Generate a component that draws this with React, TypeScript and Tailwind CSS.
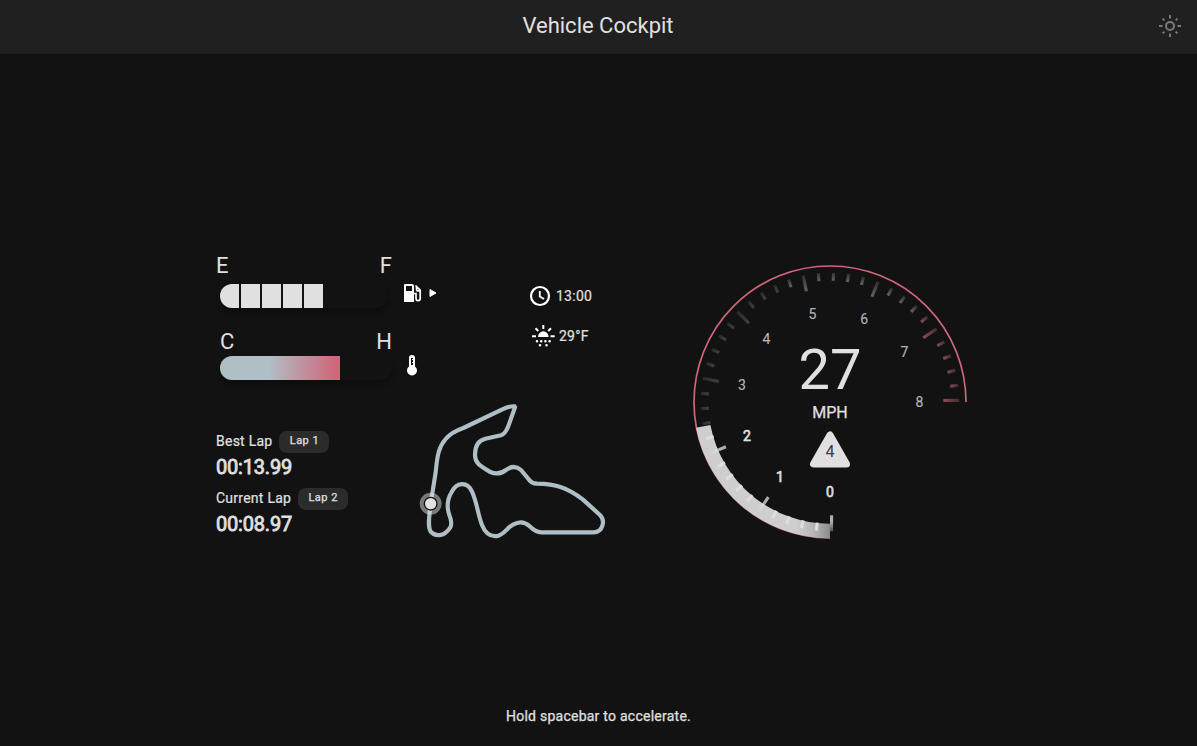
import React from "react";

const CX = 146;
const CY = 146;

function polar(r: number, deg: number): [number, number] {
  const a = (deg * Math.PI) / 180;
  return [CX - r * Math.sin(a), CY + r * Math.cos(a)];
}

function Gauge() {
  const ticks = Array.from({ length: 41 }, (_, i) => i);
  const labels: [string, number, number][] = [
    ["0", 146, 236],
    ["1", 96, 221],
    ["2", 63, 180],
    ["3", 58, 129],
    ["4", 82.5, 83],
    ["5", 128.5, 58],
    ["6", 180.3, 63],
    ["7", 220.5, 96],
    ["8", 235.5, 146],
  ];
  const [ex, ey] = polar(136.4, 79.1);
  const [ix, iy] = polar(121.8, 79.1);
  return (
    <svg width="292" height="292" viewBox="0 0 292 292" className="shrink-0 font-[Roboto,sans-serif]">
      <defs>
        <linearGradient id="fill" gradientUnits="userSpaceOnUse" x1="146" y1="0" x2="112" y2="0">
          <stop offset="0" stopColor="#8c8c8c" />
          <stop offset="0.5" stopColor="#b8b8b8" />
          <stop offset="1" stopColor="#cecece" />
        </linearGradient>
        <linearGradient id="tickOn" x1="0" y1="0" x2="0" y2="1">
          <stop offset="0" stopColor="#e0e0e0" stopOpacity="0.75" />
          <stop offset="0.4" stopColor="#e4e4e4" stopOpacity="0.75" />
          <stop offset="1" stopColor="#e0e0e0" stopOpacity="0.3" />
        </linearGradient>
        <linearGradient id="tickOff" x1="0" y1="0" x2="0" y2="1">
          <stop offset="0" stopColor="#424242" />
          <stop offset="1" stopColor="#292929" />
        </linearGradient>
        <linearGradient id="tickMid" x1="0" y1="0" x2="0" y2="1">
          <stop offset="0" stopColor="#636363" />
          <stop offset="1" stopColor="#303030" />
        </linearGradient>
        <linearGradient id="tickRed" x1="0" y1="0" x2="0" y2="1">
          <stop offset="0" stopColor="#8c4b56" />
          <stop offset="1" stopColor="#432a2f" />
        </linearGradient>
      </defs>
      <path d="M146 282A136 136 0 1 1 282 146" fill="none" stroke="#d0667a" strokeWidth="1.7" />
      <path
        d={`M146 282.400A136.4 136.4 0 0 1 ${ex} ${ey}L${ix} ${iy}A121.8 121.8 0 0 0 146 267.800Z`}
        fill="url(#fill)"
      />
      {ticks.map((i) => {
        const major = i % 5 === 0;
        const kind =
          i < 12 ? (major ? "url(#tickOn)" : "#dedede") : i > 33 ? "url(#tickRed)" : i > 23 ? "url(#tickMid)" : "url(#tickOff)";
        return (
          <rect
            key={i}
            x={146}
            y={major ? 259.3 : 267.3}
            width={3.1}
            height={major ? 16 : 8}
            fill={kind}
            transform={`rotate(${i * 6.75} 146 146)`}
          />
        );
      })}
      {labels.map(([t, x, y], i) => (
        <text
          key={t}
          x={x}
          y={y + 5}
          textAnchor="middle"
          fontSize="14"
          fill={i < 3 ? "#e0e0e0" : "#b4b4b4"}
          stroke={i < 3 ? "#e0e0e0" : "#b4b4b4"}
          strokeWidth={i < 3 ? 0.6 : 0.15}
        >
          {t}
        </text>
      ))}
      <text x="146" y="133" textAnchor="middle" fontSize="56" fill="#e0e0e0">27</text>
      <text x="146" y="162" textAnchor="middle" fontSize="16" fill="#e0e0e0" stroke="#e0e0e0" strokeWidth="0.25">MPH</text>
      <path d="M146 179L129.500 208H162.500Z" fill="#e0e0e0" stroke="#e0e0e0" strokeWidth="7" strokeLinejoin="round" />
      <text x="146" y="201" textAnchor="middle" fontSize="16" fill="#3a3a3a">4</text>
    </svg>
  );
}

function Track() {
  return (
    <svg width="210" height="155" viewBox="0 0 630 465">
      <path
        d="M62 326L77 232C82 178 87 155 107 132C120 116 137 107 160 99L277 43Q302 32 316 34L299 82Q288 117 273 121L226 131C205 136 195 150 195 179C195 204 208 211 241 231Q266 242 288 225Q312 207 333 225L357 254Q365 265 381 266C438 267 472 278 519 314L570 360C586 376 580 412 550 412H394Q377 412 359 394Q337 373 309 389C291 398 284 417 263 423C242 426 226 416 216 390C202 353 201 322 186 290C172 257 139 262 125 291C110 315 110 334 117 357Q128 384 121 397C101 428 74 424 62 410C53 395 57 374 60 340"
        fill="none" stroke="#b0bec5" strokeWidth="12.5" strokeLinejoin="bevel"
      />
      <circle cx="62" cy="326" r="33" fill="#e0e0e0" fillOpacity="0.5" />
      <circle cx="62" cy="326" r="21" fill="#121212" />
      <circle cx="62" cy="326" r="17" fill="#e2e2e2" />
    </svg>
  );
}

function Lap({ label, chip, time }: { label: string; chip: string; time: string }) {
  return (
    <div className="h-[57px]">
      <div className="flex h-[22px] items-center gap-[7px]">
        <span className="text-[14px] tracking-[0.25px] [-webkit-text-stroke:0.2px_#e0e0e0]">{label}</span>
        <span className="mt-[1px] flex h-[22px] w-[50px] items-center justify-center rounded-lg bg-[#2b2b2b] text-[11px] tracking-[0.5px] [-webkit-text-stroke:0.25px_#e0e0e0]">{chip}</span>
      </div>
      <div className="pt-[3px] text-[20px] leading-[24px] tracking-[-0.2px] [-webkit-text-stroke:0.8px_#e0e0e0]">{time}</div>
    </div>
  );
}

export default function App() {
  return (
    <div className="flex h-[746px] w-[1197px] flex-col overflow-hidden bg-[#121212] font-[Roboto,sans-serif] text-[#e0e0e0]">
      <header className="grid h-[54px] shrink-0 grid-cols-[1fr_auto_1fr] items-center bg-[#202020] pr-[15px]">
        <span />
        <h1 className="pb-[3px] pl-[14px] text-[22px] leading-[28px]">Vehicle Cockpit</h1>
        <svg width="24" height="24" viewBox="0 0 24 24" className="mb-[2px] justify-self-end" fill="none" stroke="#7a7a7a" strokeWidth="2">
          <circle cx="12" cy="12" r="4" />
          <path d="M12 1V4.500M12 19.500V23M1 12H4.500M19.500 12H23M4.600 4.600L6.400 6.400M17.600 17.600L19.400 19.400M4.600 19.400L6.400 17.600M17.600 6.400L19.400 4.600" />
        </svg>
      </header>

      <main className="flex min-h-0 flex-1 pt-[202px] pl-[216px]">
        <div className="w-[468px] shrink-0">
          <div className="flex h-[139px]">
            <div className="w-[177px] shrink-0">
              <div className="flex h-[28px] items-start justify-between pr-[1px] text-[22px] leading-[20px]">
                <span>E</span><span>F</span>
              </div>
              <div className="ml-[4px] flex h-[24px] w-[168px] gap-[2px] overflow-hidden rounded-full shadow-[0_4px_5px_rgba(0,0,0,0.3)]">
                {[0, 1, 2, 3, 4].map((i) => <div key={i} className="h-[24px] w-[19px] shrink-0 bg-[#e0e0e0]" />)}
              </div>
              <div className="flex h-[48px] items-end justify-between pr-[1px] pb-[3px] pl-[4px] text-[22px] leading-[22px]">
                <span>C</span><span>H</span>
              </div>
              <div className="ml-[4px] h-[24px] w-[172px] overflow-hidden rounded-full shadow-[0_4px_5px_rgba(0,0,0,0.3)]">
                <div className="h-[24px] w-[120.4px] bg-[linear-gradient(90deg,#b0bec5_41%,#d0667a_97%)]" />
              </div>
            </div>
            <div className="flex flex-col pt-[27px] pl-[10px]">
              <div className="flex h-[20px] w-[34px] items-center justify-between">
                <svg width="20" height="20" viewBox="0 0 20 20" className="shrink-0">
                  <path fillRule="evenodd" fill="#fff" d="M2 1H9Q11 1 11 3V19H1V2Q1 1 2 1ZM3 3V8H9V3Z" />
                  <path d="M11 10.500H13V15.500A1.700 1.700 0 0 0 17.200 15.500V7L12.500 2.500M13.500 3.500V6.500A1.600 1.600 0 0 0 16.500 7" fill="none" stroke="#fff" strokeWidth="1.700" />
                </svg>
                <svg width="8" height="10" viewBox="0 0 8 10"><path d="M1 1.500L7 5L1 8.500Z" fill="#fff" stroke="#fff" strokeLinejoin="round" /></svg>
              </div>
              <svg width="20" height="22" viewBox="0 0 20 22" className="mt-[52px]">
                <path fillRule="evenodd" fill="#fff" d="M6 3A3 3 0 0 1 12 3V11.500A5 5 0 1 1 6 11.500ZM8 3V10H10V8H9V7H10V5H9V4H10V3Z" />
              </svg>
            </div>
            <div className="ml-auto flex w-[156px] flex-col gap-[16px] pt-[28px] text-[14px] tracking-[0.25px] [-webkit-text-stroke:0.2px_#e0e0e0]">
              <div className="flex h-[24px] items-center gap-[4px]">
                <svg width="24" height="24" viewBox="0 0 24 24" fill="none" stroke="#fff" strokeWidth="2.200">
                  <circle cx="12" cy="12" r="9" /><path d="M11.800 7V12.500L16 15" strokeWidth="1.800" />
                </svg>
                <span>13:00</span>
              </div>
              <div className="flex h-[24px] items-center gap-[4px] pl-[3px]">
                <svg width="24" height="24" viewBox="0 0 24 24">
                  <path d="M7 13A5.300 5.700 0 0 1 17.600 13Z" fill="#fff" />
                  <path d="M12.300 1V5M1 12.200H5M19.500 12.200H23.700M4.500 4.200L7.300 7M20 4.200L17.200 7" stroke="#fff" strokeWidth="2" />
                  <path d="M6 17.200H6.010M10.200 17.200H10.210M14.400 17.200H14.410M18.600 17.200H18.610M9 21.300H9.010M15.500 21.300H15.510" stroke="#fff" strokeWidth="2.600" strokeLinecap="round" />
                </svg>
                <span>29°F</span>
              </div>
            </div>
          </div>
          <div className="flex">
            <div className="w-[194px] shrink-0 pt-[35px]">
              <Lap label="Best Lap" chip="Lap 1" time="00:13.99" />
              <Lap label="Current Lap" chip="Lap 2" time="00:08.97" />
            </div>
            <Track />
          </div>
        </div>
        <Gauge />
      </main>
      <footer className="flex h-[60px] shrink-0 items-center justify-center text-[14px] tracking-[0.25px] [-webkit-text-stroke:0.25px_#e0e0e0]">Hold spacebar to accelerate.</footer>
    </div>
  );
}
